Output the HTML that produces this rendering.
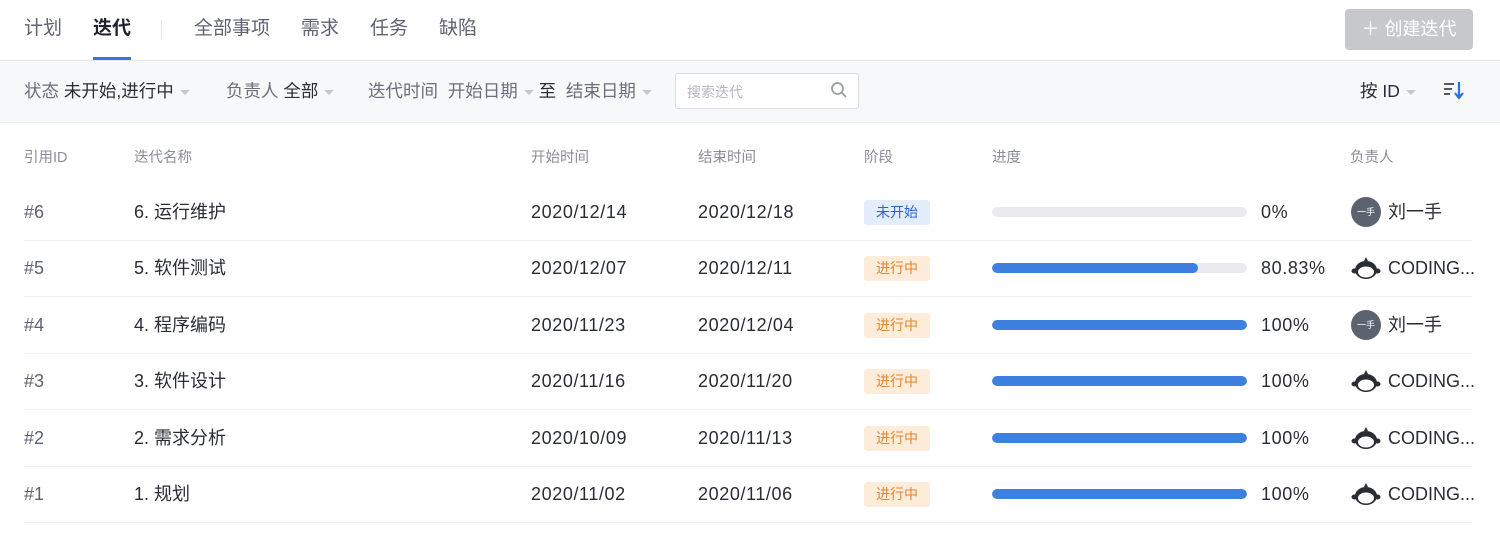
<!DOCTYPE html><html><head><meta charset="utf-8"><style>
body{margin:0;width:1500px;height:551px;background:#fff;font-family:"Liberation Sans","Noto Sans CJK SC",sans-serif;color:#323345;overflow:hidden;position:relative}
.a{position:absolute;white-space:nowrap}
.tab{font-size:19px;color:#5f6370;top:17px;line-height:24px}
.f{font-size:17.5px;top:80px;color:#6b6f7b;line-height:22px}
.f b{font-weight:normal;color:#2a2d36}
.tri{display:inline-block;width:0;height:0;border-left:5px solid transparent;border-right:5px solid transparent;border-top:5px solid #c4c7cd;vertical-align:middle;margin-left:6px}
.th{font-size:14.5px;color:#8a8e99;top:148px;line-height:20px}
.td{font-size:18px;color:#2a2d36;line-height:20px}
.dt{letter-spacing:.6px}
.line{position:absolute;left:24px;width:1448px;height:1px;background:#eceef1}
.tag{position:absolute;left:864px;width:66px;height:25px;border-radius:3px;font-size:14px;text-align:center;line-height:25px}
.bar{position:absolute;left:992px;width:255px;height:10px;border-radius:5px;background:#e9ebee;overflow:hidden}
.bar i{display:block;height:10px;background:#3d80e0;border-radius:5px}
.av{position:absolute;left:1351px;width:30px;height:30px;border-radius:50%;background:#5c6370;color:#fff;font-size:9px;text-align:center;line-height:30px}
</style></head><body>
<div class="a tab" style="left:24px">计划</div>
<div class="a tab" style="left:93px;color:#1f2330;font-weight:bold">迭代</div>
<div class="a" style="left:93px;top:57px;width:38px;height:3px;background:#3f74d6"></div>
<div class="a" style="left:161px;top:20px;width:1px;height:20px;background:#e4e6ea"></div>
<div class="a tab" style="left:194px">全部事项</div>
<div class="a tab" style="left:301px">需求</div>
<div class="a tab" style="left:370px">任务</div>
<div class="a tab" style="left:439px">缺陷</div>
<div class="a" style="left:1345px;top:9px;width:128px;height:41px;background:#c6c8cc;border-radius:4px;color:#fff;font-size:18px;line-height:41px;text-align:center">＋ 创建迭代</div>
<div class="a" style="left:0;top:60px;width:1500px;height:61px;background:#f7f8fa;border-top:1px solid #e3e5e9;border-bottom:1px solid #eceef1"></div>
<div class="a f" style="left:24px">状态 <b>未开始,进行中</b><span class="tri"></span></div>
<div class="a f" style="left:226px">负责人 <b>全部</b><span class="tri"></span></div>
<div class="a f" style="left:368px">迭代时间 &nbsp;开始日期<span class="tri"></span> <b>至</b> &nbsp;结束日期<span class="tri"></span></div>
<div class="a" style="left:675px;top:73px;width:182px;height:34px;background:#fff;border:1px solid #d9dce1;border-radius:3px"></div>
<div class="a" style="left:687px;top:82px;font-size:14px;color:#b4b7bf">搜索迭代</div>
<svg class="a" style="left:830px;top:81px" width="18" height="18" viewBox="0 0 18 18"><circle cx="7.5" cy="7.5" r="5.5" fill="none" stroke="#9a9ea8" stroke-width="1.8"/><path d="M11.5 11.5L16 16" stroke="#9a9ea8" stroke-width="1.8"/></svg>
<div class="a f" style="left:1360px"><b>按 ID</b><span class="tri"></span></div>
<svg class="a" style="left:1442px;top:80px" width="24" height="22" viewBox="0 0 24 22"><path d="M2 4h10M2 9h8M2 14h6" stroke="#555a66" stroke-width="2"/><path d="M17 2v15M13 13l4 5 4-5" stroke="#2f6fdc" stroke-width="2.2" fill="none"/></svg>
<div class="a th" style="left:24px">引用ID</div><div class="a th" style="left:134px">迭代名称</div><div class="a th" style="left:531px">开始时间</div><div class="a th" style="left:698px">结束时间</div><div class="a th" style="left:864px">阶段</div><div class="a th" style="left:992px">进度</div><div class="a th" style="left:1350px">负责人</div>
<div id="rows"></div>
<script>
var d=[["#6","6. 运行维护","2020/12/14","2020/12/18",0,"0%",1],["#5","5. 软件测试","2020/12/07","2020/12/11",80.83,"80.83%",0],["#4","4. 程序编码","2020/11/23","2020/12/04",100,"100%",1],["#3","3. 软件设计","2020/11/16","2020/11/20",100,"100%",0],["#2","2. 需求分析","2020/10/09","2020/11/13",100,"100%",0],["#1","1. 规划","2020/11/02","2020/11/06",100,"100%",0]];
var h="";d.forEach(function(r,i){var c=Math.round(212+i*56.4),t=c-10;
h+='<div class="a td" style="left:24px;top:'+t+'px;color:#5f6370">'+r[0]+'</div><div class="a td" style="left:134px;top:'+t+'px">'+r[1]+'</div><div class="a td dt" style="left:531px;top:'+t+'px">'+r[2]+'</div><div class="a td dt" style="left:698px;top:'+t+'px">'+r[3]+'</div>';
h+=r[4]==0?'<div class="tag" style="top:'+(c-12)+'px;background:#e3edfc;color:#2d63c8">未开始</div>':'<div class="tag" style="top:'+(c-12)+'px;background:#fdecd9;color:#e3862e">进行中</div>';
h+='<div class="bar" style="top:'+(c-5)+'px"><i style="width:'+r[4]+'%"></i></div><div class="a td dt" style="left:1261px;top:'+t+'px">'+r[5]+'</div>';
if(r[6])h+='<div class="av" style="top:'+(c-15)+'px">一手</div><div class="a td" style="left:1388px;top:'+t+'px">刘一手</div>';
else h+='<svg class="a" style="left:1351px;top:'+(c-13)+'px" width="30" height="26" viewBox="0 0 30 26"><ellipse cx="15" cy="15" rx="11" ry="9" fill="#2a2d36"/><ellipse cx="15" cy="17" rx="8" ry="5.5" fill="#fff"/><ellipse cx="3.5" cy="16" rx="3" ry="2.5" fill="#2a2d36"/><ellipse cx="26.5" cy="16" rx="3" ry="2.5" fill="#2a2d36"/><path d="M13 6l2-4 2 4z" fill="#2a2d36"/></svg><div class="a td" style="left:1388px;top:'+t+'px">CODING...</div>';
h+='<div class="line" style="top:'+(c+28)+'px"></div>';});
document.getElementById("rows").innerHTML=h;
</script>
</body></html>
